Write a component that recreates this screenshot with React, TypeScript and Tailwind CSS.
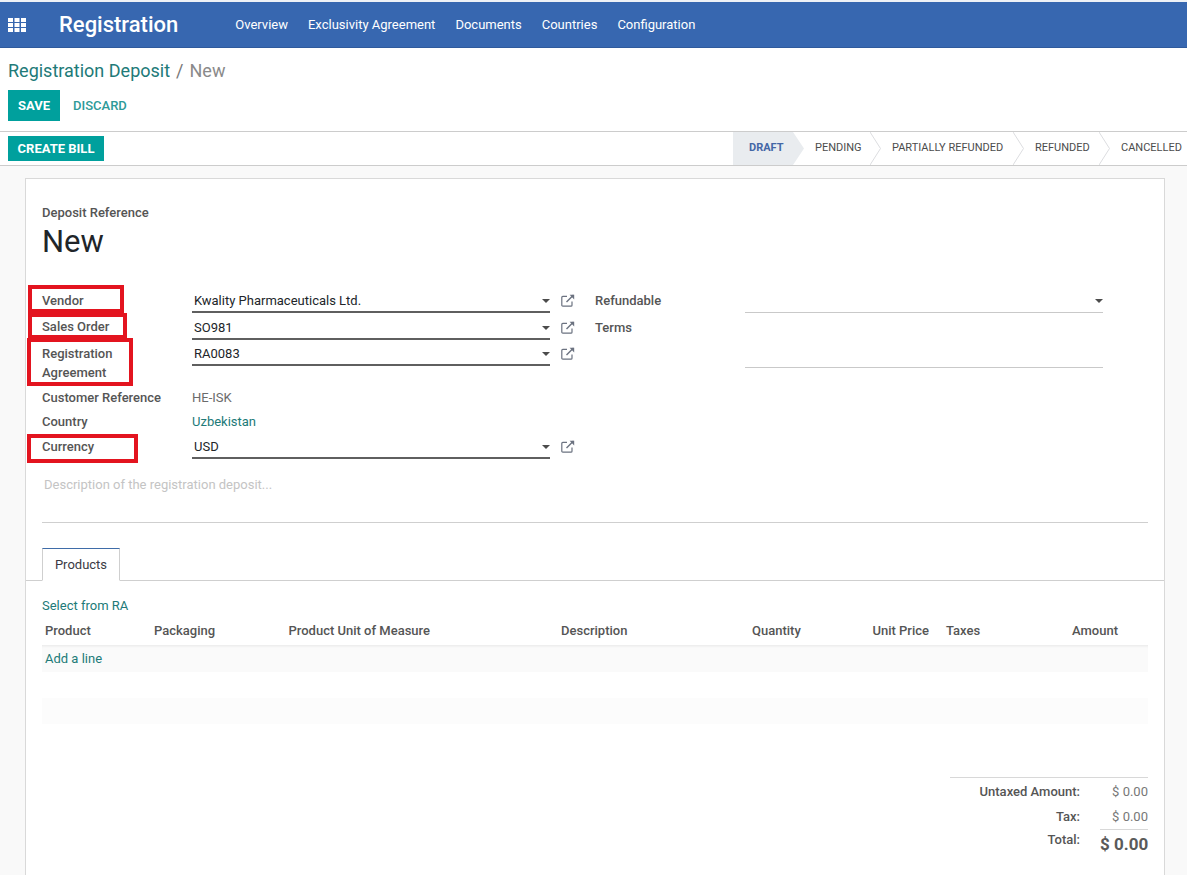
import React from "react";

const font = { fontFamily: "Roboto, 'Noto Sans', sans-serif" };

function Ext() {
  return (
    <svg width="14" height="13" viewBox="0 0 14 13" className="shrink-0" fill="none" stroke="#6b7280" strokeWidth="1.2">
      <path d="M11 7.5V11.2a1 1 0 0 1-1 1H1.8a1 1 0 0 1-1-1V3.4a1 1 0 0 1 1-1H6" />
      <path d="M5.5 8 12.5 1" strokeWidth="1.5" />
      <path d="M8.6.8h4.6v4.6L8.6.8z" fill="#6b7280" stroke="none" />
    </svg>
  );
}

function Caret() {
  return <span className="ml-auto mb-[1px] h-0 w-0 border-x-[4px] border-t-[4px] border-x-transparent border-t-[#4c4c4c]" />;
}

function M2O({ value, h }: { value: string; h: string }) {
  return (
    <div className={`flex items-start gap-[11px] ${h}`}>
      <div className="flex h-[25px] w-[358px] items-center border-b-2 border-[#5f5f5f] pl-[2px] pt-[3px] text-[#212529]">
        <span>{value}</span>
        <Caret />
      </div>
      <div className="pt-[6px]"><Ext /></div>
    </div>
  );
}

function Chevron() {
  return (
    <svg width="11" height="33" viewBox="0 0 11 33" className="absolute right-0 top-0" fill="none" stroke="#dcdde0">
      <path d="M0 0l10.5 16.5L0 33" />
    </svg>
  );
}

function Label({ children, pt = "pt-[3px]" }: { children: React.ReactNode; pt?: string }) {
  return <div className={`w-[150px] ${pt} text-[13px] font-medium`}>{children}</div>;
}

export default function App() {
  return (
    <div style={font} className="h-[875px] w-[1187px] overflow-hidden bg-white text-[13px] text-[#555]">
      <div className="h-[2px] bg-[#eef1f6]" />
      <nav className="flex h-[46px] items-center border-b border-[#2f5a9c] bg-[#3767b0] text-white">
        <svg width="18" height="14" viewBox="0 0 18 14" className="ml-[8px]" fill="#fff">
          <rect x="0" y="0" width="5" height="4" /><rect x="6.5" y="0" width="5" height="4" /><rect x="13" y="0" width="5" height="4" />
          <rect x="0" y="5" width="5" height="4" /><rect x="6.5" y="5" width="5" height="4" /><rect x="13" y="5" width="5" height="4" />
          <rect x="0" y="10" width="5" height="4" /><rect x="6.5" y="10" width="5" height="4" /><rect x="13" y="10" width="5" height="4" />
        </svg>
        <span className="ml-[33px] text-[22px] font-medium">Registration</span>
        <div className="ml-[57px] flex gap-[20px] text-[13px]">
          <span>Overview</span>
          <span>Exclusivity Agreement</span>
          <span>Documents</span>
          <span>Countries</span>
          <span>Configuration</span>
        </div>
      </nav>

      <div className="h-[83px] pl-[8px] pt-[12px]">
        <div className="text-[18px] leading-[22px]">
          <span className="text-[#217a78]">Registration Deposit</span>
          <span className="mx-[6px] text-[#777]">/</span>
          <span className="text-[#8a8a8a]">New</span>
        </div>
        <div className="mt-[8px] flex items-center">
          <span className="flex h-[31px] w-[52px] items-center justify-center bg-[#00a09d] pt-[1px] text-[13px] font-bold text-white">SAVE</span>
          <span className="ml-[13px] pt-[1px] text-[13px] font-medium text-[#2e9a98]">DISCARD</span>
        </div>
      </div>

      <div className="flex h-[35px] items-center justify-between border-y border-[#ccc]">
        <span className="ml-[8px] flex h-[25px] w-[96px] items-center justify-center bg-[#00a09d] pt-[1px] text-[13px] font-bold text-white">CREATE BILL</span>
        <div className="flex h-[33px] items-center pb-[1px] text-[11px] text-[#4c4c4c]">
          <div className="relative h-[33px] w-[71px]">
            <svg width="71" height="33" viewBox="0 0 71 33" className="absolute left-0 top-0">
              <path d="M0 0h60l11 16.5L60 33H0z" fill="#e9ecef" />
            </svg>
            <span className="absolute left-[16px] top-[8px] font-bold text-[#4467a6]">DRAFT</span>
          </div>
          <div className="relative flex h-[33px] w-[77px] items-center pl-[11px]">
            PENDING
            <Chevron />
          </div>
          <div className="relative flex h-[33px] w-[143px] items-center whitespace-nowrap pl-[11px]">
            PARTIALLY REFUNDED
            <Chevron />
          </div>
          <div className="relative flex h-[33px] w-[86px] items-center pl-[11px]">
            REFUNDED
            <Chevron />
          </div>
          <div className="flex h-[33px] w-[77px] items-center whitespace-nowrap pl-[11px]">CANCELLED</div>
        </div>
      </div>

      <div className="h-[710px] bg-[#f9f9f9] px-[25px] pt-[12px]">
        <div className="h-[720px] w-[1140px] border border-[#d9d9d9] bg-white pt-[26px]">
          <div className="px-[16px]">
            <div className="text-[13px] font-medium leading-[15px]">Deposit Reference</div>
            <div className="mt-[4px] text-[31px] leading-[36px] text-[#212529]">New</div>

            <div className="mt-[28px] flex">
              <div className="w-[553px]">
                <div className="flex"><Label>Vendor</Label><M2O value="Kwality Pharmaceuticals Ltd." h="h-[27px]" /></div>
                <div className="flex"><Label pt="pt-[2px]">Sales Order</Label><M2O value="SO981" h="h-[26px]" /></div>
                <div className="flex h-[44px]">
                  <div className="w-[150px] pt-[3px] text-[13px] font-medium leading-[19px]">Registration<br />Agreement</div>
                  <M2O value="RA0083" h="h-[26px]" />
                </div>
                <div className="flex h-[24px] items-center pt-[2px]">
                  <div className="w-[150px] text-[13px] font-medium">Customer Reference</div>
                  <span className="text-[#6b6b6b]">HE-ISK</span>
                </div>
                <div className="flex h-[25px] items-center">
                  <div className="w-[150px] text-[13px] font-medium">Country</div>
                  <span className="text-[#217a78]">Uzbekistan</span>
                </div>
                <div className="flex"><Label>Currency</Label><M2O value="USD" h="h-[26px]" /></div>
              </div>
              <div className="flex-1">
                <div className="flex">
                  <Label>Refundable</Label>
                  <div className="flex h-[25px] w-[358px] items-center border-b border-[#c9c9c9] pt-[3px]"><Caret /></div>
                </div>
                <div className="flex">
                  <Label pt="pt-[5px]">Terms</Label>
                  <div className="h-[55px] w-[358px] border-b border-[#c9c9c9]" />
                </div>
              </div>
            </div>

            <div className="mt-[15px] h-[48px] border-b border-[#cfcfcf] pl-[2px] text-[#c4c4c4]">Description of the registration deposit...</div>
          </div>

          <div className="mt-[25px] flex h-[33px] border-b border-[#cfcfcf] px-[16px]">
            <div className="flex h-[33px] w-[78px] items-center justify-center border border-b-white border-[#cfcfcf] border-t-[#3f6ca8] bg-white text-[#3a3a44]">Products</div>
          </div>

          <div className="px-[16px]">
            <div className="mt-[15px] text-[#217a78]">Select from RA</div>
            <div className="mt-[3px] flex h-[26px] items-center pb-[1px] text-[13px] font-medium">
              <span className="ml-[3px] w-[109px]">Product</span>
              <span className="w-[134.5px]">Packaging</span>
              <span className="w-[272.5px]">Product Unit of Measure</span>
              <span className="w-[191px]">Description</span>
              <span className="w-[49px]">Quantity</span>
              <span className="w-[128px] text-right">Unit Price</span>
              <span className="ml-[17px] w-[50px]">Taxes</span>
              <span className="w-[122px] text-right">Amount</span>
            </div>
            <div className="flex h-[27px] items-center bg-[#fafafa] pl-[3px] pt-[1px] text-[#217a78] shadow-[inset_0_3px_3px_-2px_rgba(0,0,0,0.08)]">Add a line</div>
            <div className="h-[26px]" />
            <div className="h-[26px] bg-[#fcfcfc]" />

            <div className="mt-[53px] ml-auto w-[198px] border-t border-[#d8d8d8]">
              <div className="flex h-[28px] items-center justify-end">
                <span className="text-[13px] font-medium">Untaxed Amount:</span>
                <span className="w-[68px] text-right text-[#777]">$ 0.00</span>
              </div>
              <div className="flex h-[23px] items-center justify-end">
                <span className="text-[13px] font-medium">Tax:</span>
                <span className="w-[68px] text-right text-[#777]">$ 0.00</span>
              </div>
              <div className="flex justify-end">
                <span className="pt-[1px] text-[13px] font-medium">Total:</span>
                <span className="ml-[20px] w-[48px] whitespace-nowrap border-t border-[#d8d8d8] text-right text-[17px] font-bold leading-[28px] text-[#5a5a5a]">$ 0.00</span>
              </div>
            </div>
          </div>
        </div>
      </div>

      <div className="absolute left-[28px] top-[285px] h-[28px] w-[96px] border-[4px] border-[#e3141f]" />
      <div className="absolute left-[28px] top-[313px] h-[26px] w-[99px] border-[4px] border-[#e3141f]" />
      <div className="absolute left-[27px] top-[338px] h-[48px] w-[106px] border-[4px] border-[#e3141f]" />
      <div className="absolute left-[27px] top-[434px] h-[29px] w-[111px] border-[4px] border-[#e3141f]" />
    </div>
  );
}
